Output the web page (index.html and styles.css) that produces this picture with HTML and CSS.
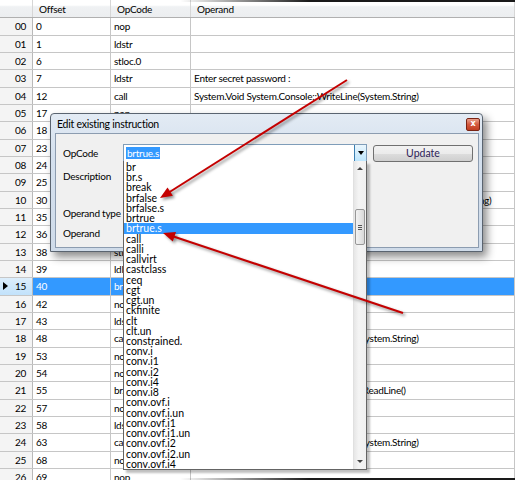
FILE: index.html
```html
<!DOCTYPE html>
<html>
<head>
<meta charset="utf-8">
<link rel="stylesheet" href="styles.css">
</head>
<body>
<div class="app">
  <div class="grid">
    <div class="row hdr"><div class="rh"></div><div class="c">Offset</div><div class="c">OpCode</div><div class="c">Operand</div></div>
    <div class="row"><div class="rh">00</div><div class="c">0</div><div class="c">nop</div><div class="c"></div></div>
    <div class="row"><div class="rh">01</div><div class="c">1</div><div class="c">ldstr</div><div class="c"></div></div>
    <div class="row"><div class="rh">02</div><div class="c">6</div><div class="c">stloc.0</div><div class="c"></div></div>
    <div class="row"><div class="rh">03</div><div class="c">7</div><div class="c">ldstr</div><div class="c">Enter secret password :</div></div>
    <div class="row"><div class="rh">04</div><div class="c">12</div><div class="c">call</div><div class="c">System.Void System.Console::WriteLine(System.String)</div></div>
    <div class="row"><div class="rh">05</div><div class="c">17</div><div class="c">nop</div><div class="c"></div></div>
    <div class="row"><div class="rh">06</div><div class="c">18</div><div class="c">ldloc.0</div><div class="c"></div></div>
    <div class="row"><div class="rh">07</div><div class="c">23</div><div class="c">stloc.1</div><div class="c"></div></div>
    <div class="row"><div class="rh">08</div><div class="c">24</div><div class="c">ldloc.1</div><div class="c"></div></div>
    <div class="row"><div class="rh">09</div><div class="c">25</div><div class="c">ldstr</div><div class="c"></div></div>
    <div class="row"><div class="rh">10</div><div class="c">30</div><div class="c">call</div><div class="c">System.Boolean System.String::op_Equality(System.String,System.String)</div></div>
    <div class="row"><div class="rh">11</div><div class="c">35</div><div class="c">ldc.i4.0</div><div class="c"></div></div>
    <div class="row"><div class="rh">12</div><div class="c">36</div><div class="c">ceq</div><div class="c"></div></div>
    <div class="row"><div class="rh">13</div><div class="c">38</div><div class="c">stloc.2</div><div class="c"></div></div>
    <div class="row"><div class="rh">14</div><div class="c">39</div><div class="c">ldloc.2</div><div class="c"></div></div>
    <div class="row sel"><div class="rh"><span class="mark"></span>15</div><div class="c">40</div><div class="c">brtrue.s</div><div class="c"></div></div>
    <div class="row"><div class="rh">16</div><div class="c">42</div><div class="c">nop</div><div class="c"></div></div>
    <div class="row"><div class="rh">17</div><div class="c">43</div><div class="c">ldstr</div><div class="c"></div></div>
    <div class="row"><div class="rh">18</div><div class="c">48</div><div class="c">call</div><div class="c">System.Void System.Console::WriteLine(System.String)</div></div>
    <div class="row"><div class="rh">19</div><div class="c">53</div><div class="c">nop</div><div class="c"></div></div>
    <div class="row"><div class="rh">20</div><div class="c">54</div><div class="c">nop</div><div class="c"></div></div>
    <div class="row"><div class="rh">21</div><div class="c">55</div><div class="c">br.s</div><div class="c">System.String [mscorlib]System.Console::ReadLine()</div></div>
    <div class="row"><div class="rh">22</div><div class="c">57</div><div class="c">nop</div><div class="c"></div></div>
    <div class="row"><div class="rh">23</div><div class="c">58</div><div class="c">ldstr</div><div class="c"></div></div>
    <div class="row"><div class="rh">24</div><div class="c">63</div><div class="c">call</div><div class="c">System.Void System.Console::WriteLine(System.String)</div></div>
    <div class="row"><div class="rh">25</div><div class="c">68</div><div class="c">nop</div><div class="c"></div></div>
    <div class="row"><div class="rh">26</div><div class="c">69</div><div class="c">nop</div><div class="c"></div></div>
  </div>

  <div class="dialog">
    <div class="titlebar">
      <span class="title">Edit existing instruction</span>
      <span class="close">x</span>
    </div>
    <div class="client">
      <div class="frow">
        <span class="lbl">OpCode</span>
        <div class="combo"><span class="ctext"><span class="chl">brtrue.s</span></span><span class="cbtn"><span class="tri"></span></span></div>
        <button class="btn">Update</button>
      </div>
      <div class="lbl l-desc">Description</div>
      <div class="lbl l-otype">Operand type</div>
      <div class="lbl l-op">Operand</div>
    </div>
  </div>

  <div class="droplist">
    <div class="items">
      <div class="it">br</div>
      <div class="it">br.s</div>
      <div class="it">break</div>
      <div class="it">brfalse</div>
      <div class="it">brfalse.s</div>
      <div class="it">brtrue</div>
      <div class="it on">brtrue.s</div>
      <div class="it">call</div>
      <div class="it">calli</div>
      <div class="it">callvirt</div>
      <div class="it">castclass</div>
      <div class="it">ceq</div>
      <div class="it">cgt</div>
      <div class="it">cgt.un</div>
      <div class="it">ckfinite</div>
      <div class="it">clt</div>
      <div class="it">clt.un</div>
      <div class="it">constrained.</div>
      <div class="it">conv.i</div>
      <div class="it">conv.i1</div>
      <div class="it">conv.i2</div>
      <div class="it">conv.i4</div>
      <div class="it">conv.i8</div>
      <div class="it">conv.ovf.i</div>
      <div class="it">conv.ovf.i.un</div>
      <div class="it">conv.ovf.i1</div>
      <div class="it">conv.ovf.i1.un</div>
      <div class="it">conv.ovf.i2</div>
      <div class="it">conv.ovf.i2.un</div>
      <div class="it">conv.ovf.i4</div>
    </div>
    <div class="vscroll">
      <span class="sarrow up"></span>
      <span class="thumb"><span class="grip"></span></span>
      <span class="sarrow down"></span>
    </div>
  </div>

  <svg class="arrows" width="515" height="480" viewBox="0 0 515 480">
    <g class="arr">
      <line x1="347" y1="80" x2="168" y2="193"/>
      <polygon points="160,198 172.9,195.8 167.5,187.4"/>
      <line x1="403" y1="313" x2="172" y2="236"/>
      <polygon points="163,233 176,232.1 172.8,241.5"/>
    </g>
  </svg>
  <div class="edge top"></div>
  <div class="edge bottom"></div>
</div>
</body>
</html>
```
FILE: styles.css
```css
html, body {
  margin: 0;
  padding: 0;
  background: #fff;
}
body {
  width: 515px;
  height: 480px;
  overflow: hidden;
  font-family: Lato, "Noto Sans", sans-serif;
  font-size: 10px;
  letter-spacing: -0.25px;
  color: #000;
}
.app {
  position: relative;
  width: 515px;
  height: 480px;
  overflow: hidden;
}
.grid {
  display: flex;
  flex-direction: column;
}
.row {
  display: grid;
  grid-template-columns: 33px 78px 80px 1fr;
  height: 17.33px;
  box-sizing: border-box;
  border-bottom: 1px solid #c6c6c6;
}
.row .c, .row .rh {
  display: flex;
  align-items: center;
  white-space: nowrap;
  overflow: hidden;
  border-right: 1px solid #c6c6c6;
}
.row .c { padding-left: 3px; }
.row .rh {
  justify-content: flex-end;
  padding-right: 6px;
  background: #f4f4f4;
  border-right: 1px solid #b9b9b9;
}
.row.hdr {
  height: 18.3px;
  background: linear-gradient(#ffffff 0, #ffffff 30%, #eff1f3 40%, #eceef0 100%);
  border-bottom: 1px solid #b0b0b0;
}
.row.hdr .c { padding-left: 6px; border-right-color: #d6d6d6; }
.row.hdr .rh { background: transparent; border-right-color: #d6d6d6; }
.row.sel .c { background: #3399ff; color: #fff; }
.row.sel .rh {
  background: linear-gradient(#dceefc, #c2e2fb);
  justify-content: space-between;
  padding-left: 3px;
}
.mark {
  width: 0;
  height: 0;
  border-left: 5px solid #000;
  border-top: 4px solid transparent;
  border-bottom: 4px solid transparent;
}

/* dialog */
.dialog {
  position: absolute;
  left: 50px;
  top: 113px;
  width: 433px;
  height: 139px;
  box-sizing: border-box;
  border: 1px solid #5a6470;
  border-radius: 4px 4px 0 0;
  background: linear-gradient(#e3ebf4, #d4e0ee 30%, #cfdbe9);
  box-shadow: 4px 5px 8px rgba(0,0,0,0.45);
  display: flex;
  flex-direction: column;
}
.titlebar {
  height: 18px;
  display: flex;
  align-items: center;
  justify-content: space-between;
  padding: 0 2px 0 6px;
}
.title {
  font-size: 10.5px;
  color: #000;
  margin-top: 1px;
}
.close {
  width: 14px;
  height: 13px;
  box-sizing: border-box;
  border: 1px solid #7a2414;
  border-radius: 2px;
  background: linear-gradient(#e9a08c, #d4593e 50%, #c13d20);
  color: #fff;
  font-family: "DejaVu Sans", sans-serif;
  font-weight: bold;
  font-size: 8px;
  letter-spacing: 0;
  line-height: 10px;
  text-align: center;
  margin-top: 3px;
}
.client {
  flex: 1;
  margin: 1px 3px 3px 4px;
  background: #f0f0f0;
  border: 1px solid #8c9cb0;
  padding: 10px 0 0 7px;
}
.frow {
  display: flex;
  align-items: center;
  height: 18px;
}
.lbl {
  line-height: 12px;
  height: 12px;
}
.frow .lbl { width: 60px; }
.combo {
  width: 244px;
  height: 18px;
  box-sizing: border-box;
  border: 1px solid #7f9db9;
  background: #fff;
  display: flex;
  align-items: stretch;
}
.ctext {
  flex: 1;
  display: flex;
  align-items: center;
  padding-left: 2px;
}
.chl {
  background: #3399ff;
  color: #fff;
  padding: 0 1px;
  line-height: 12px;
}
.cbtn {
  width: 11px;
  border-left: 1px solid #3c7fb1;
  background: linear-gradient(#eaf6fd, #bee6fd);
  display: flex;
  align-items: center;
  justify-content: center;
}
.tri {
  width: 0;
  height: 0;
  border-top: 4px solid #000;
  border-left: 3px solid transparent;
  border-right: 3px solid transparent;
}
.btn {
  margin-left: 6px;
  width: 100px;
  height: 17px;
  box-sizing: border-box;
  border: 1px solid #707070;
  border-radius: 3px;
  background: linear-gradient(#f2f2f2, #ebebeb 50%, #dddddd 51%, #cfcfcf);
  font-family: Lato, "Noto Sans", sans-serif;
  font-size: 10.5px;
  letter-spacing: 0;
  color: #2e1d58;
  padding: 0;
}
.l-desc { margin-top: 8px; }
.l-otype { margin-top: 25px; }
.l-op { margin-top: 8px; }

/* dropdown list */
.droplist {
  position: absolute;
  left: 123px;
  top: 161px;
  width: 244px;
  height: 309px;
  box-sizing: border-box;
  border: 1px solid #646464;
  border-top: none;
  background: #fff;
  display: flex;
  box-shadow: 3px 3px 2px rgba(0,0,0,0.25);
}
.items {
  flex: 1;
  padding-top: 1px;
}
.it {
  height: 10.24px;
  line-height: 10.24px;
  padding-left: 2px;
  font-size: 10.5px;
  letter-spacing: 0;
  white-space: nowrap;
}
.it.on { background: #3399ff; color: #fff; }
.vscroll {
  width: 12px;
  background: linear-gradient(to right, #e6e6e6, #f4f4f4 40%, #f0f0f0);
  border-left: 1px solid #e0e0e0;
  display: flex;
  flex-direction: column;
  align-items: center;
}
.sarrow {
  width: 0;
  height: 0;
  border-left: 3px solid transparent;
  border-right: 3px solid transparent;
}
.sarrow.up { border-bottom: 3px solid #444; margin-top: 6px; }
.sarrow.down { border-top: 3px solid #444; margin-top: auto; margin-bottom: 6px; }
.thumb {
  margin-top: 39px;
  width: 10px;
  height: 36px;
  box-sizing: border-box;
  border: 1px solid #979797;
  border-radius: 2px;
  background: linear-gradient(to right, #f2f2f2, #e6e6e6 50%, #d8d8d8);
  display: flex;
  align-items: center;
  justify-content: center;
}
.grip {
  width: 4px;
  height: 5px;
  background: repeating-linear-gradient(#555 0, #555 1px, transparent 1px, transparent 2px);
}

/* annotation arrows */
.arrows {
  position: absolute;
  left: 0;
  top: 0;
  pointer-events: none;
}
.arr {
  filter: drop-shadow(2px 2px 1.5px rgba(0,0,0,0.45));
}
.arr line { stroke: #c40000; stroke-width: 2; }
.arr polygon { fill: #c40000; }

.edge {
  position: absolute;
  left: 0;
  width: 515px;
  height: 2px;
  background: linear-gradient(to right, rgba(0,0,0,0) 35%, #1a1a1a 60%);
}
.edge.top { top: 0; }
.edge.bottom { top: 478px; }
```
